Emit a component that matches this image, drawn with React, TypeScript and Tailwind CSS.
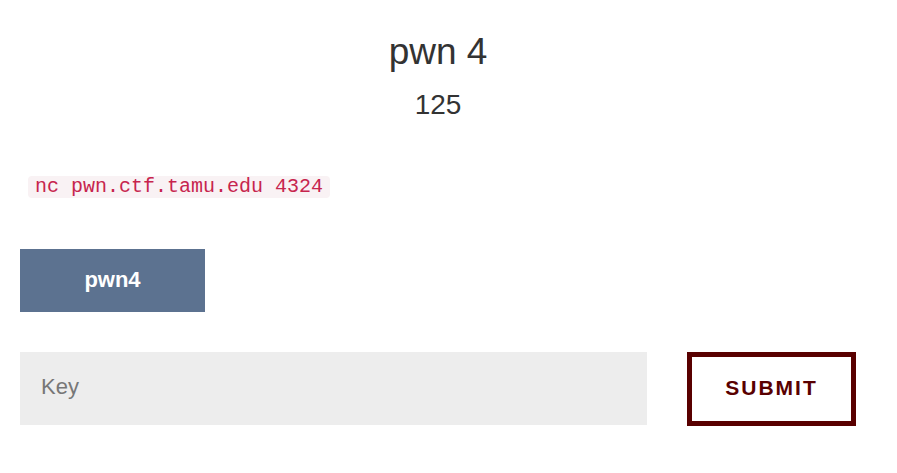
export default function App() {
  return (
    <div className="w-[897px] h-[473px] bg-white font-['Liberation_Sans',Arial,sans-serif] text-[#333]">
      <div className="px-[20px] w-[876px]">
        <div className="pt-[28px] text-center">
          <h2 className="text-[37px] leading-[48px]">pwn 4</h2>
          <h4 className="mt-[13px] text-[28px] leading-[32px]">125</h4>
        </div>
        <div className="pl-[8px] mt-[54px]">
          <code className="inline-block bg-[#f9f2f4] text-[#c7254e] rounded-[4px] px-[7px] py-[1px] text-[20px] leading-[20px] font-['Liberation_Mono','Courier_New',monospace]">
            nc pwn.ctf.tamu.edu 4324
          </code>
        </div>
        <div className="mt-[50px]">
          <button className="w-[185px] h-[63px] bg-[#5c7290] text-white font-bold text-[22px] pb-[2px]">
            pwn4
          </button>
        </div>
        <div className="mt-[40px] flex gap-[40px]">
          <input
            placeholder="Key"
            className="w-[627px] h-[73px] bg-[#ededed] px-[21px] pb-[3px] text-[22px] placeholder:text-[#777] outline-none"
          />
          <button className="w-[169px] h-[74px] border-[5px] border-[#590000] text-[#590000] font-bold text-[21px] tracking-[2px] pb-[3px]">
            SUBMIT
          </button>
        </div>
      </div>
    </div>
  );
}
